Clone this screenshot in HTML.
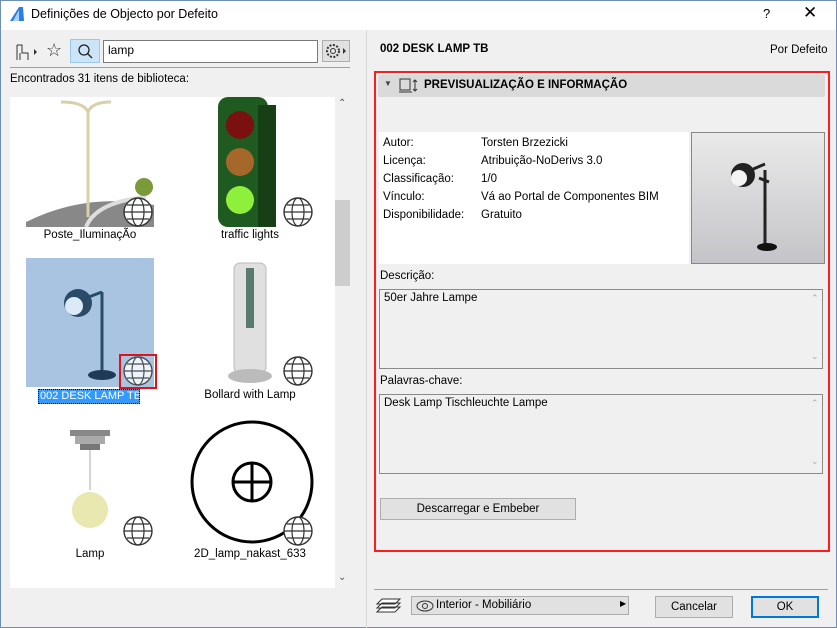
<!DOCTYPE html><html><head><meta charset="utf-8"><style>
*{box-sizing:border-box;margin:0;padding:0}
body{width:837px;height:628px;overflow:hidden;background:#f0f0f0;font-family:"Segoe UI","Liberation Sans",sans-serif;font-size:12px;color:#000;position:relative}
.a{position:absolute;white-space:nowrap}
.g{position:absolute;width:30px;height:30px}
.lbl{position:absolute;width:160px;text-align:center;font-size:11.5px;white-space:nowrap}
.sa{position:absolute;font-size:9px;color:#aaa}
</style></head><body>
<div class="a" style="left:0;top:0;width:837px;height:628px;border:1px solid #6d8fb3"></div>
<div class="a" style="left:1px;top:1px;width:835px;height:29px;background:#fff"></div>
<svg class="a" style="left:9px;top:6px" width="16" height="16"><path d="M1 15 L10 1 L14 1 L15 15Z" fill="#2b7fe0"/><path d="M4 15 L10 4 L10 15Z" fill="#a9d0ff"/></svg>
<div class="a" style="left:31px;top:7px;font-size:12.5px">Definições de Objecto por Defeito</div>
<div class="a" style="left:763px;top:6px;font-size:13px">?</div>
<div class="a" style="left:803px;top:3px;font-size:17px;font-weight:300">✕</div>
<svg class="a" style="left:15px;top:43px" width="24" height="18"><path d="M2 2h5v8h6v7M2 2v15M5 10v7M7 10h6" stroke="#333" fill="none"/><path d="M19 6l3 3-3 3z" fill="#333"/></svg>
<div class="a" style="left:46px;top:40px;font-size:18px;color:#333">☆</div>
<div class="a" style="left:70px;top:39px;width:30px;height:24px;background:#cce4f7;border:1px solid #99c9ef"></div>
<svg class="a" style="left:77px;top:43px" width="16" height="16"><circle cx="7" cy="7" r="5" stroke="#222" fill="none" stroke-width="1.3"/><path d="M10.5 10.5L15 15" stroke="#222" stroke-width="1.3"/></svg>
<div class="a" style="left:103px;top:40px;width:215px;height:23px;background:#fff;border:1px solid #7a7a7a;padding:2px 4px;font-size:12px">lamp</div>
<div class="a" style="left:322px;top:40px;width:28px;height:22px;background:#e1e1e1;border:1px solid #adadad"></div>
<svg class="a" style="left:324px;top:42px" width="24" height="18"><circle cx="9" cy="9" r="6" stroke="#333" fill="none" stroke-dasharray="2 1.5" stroke-width="2"/><circle cx="9" cy="9" r="2.5" stroke="#333" fill="none"/><path d="M19 6l3 3-3 3z" fill="#333"/></svg>
<div class="a" style="left:10px;top:67px;width:340px;height:1px;background:#a0a0a0"></div>
<div class="a" style="left:10px;top:73px;font-size:11.5px">Encontrados 31 itens de biblioteca:</div>
<div class="a" style="left:10px;top:97px;width:340px;height:491px;background:#fff"></div>
<div class="a" style="left:335px;top:97px;width:15px;height:491px;background:#f0f0f0"></div>
<div class="a" style="left:335px;top:200px;width:15px;height:86px;background:#cdcdcd"></div>
<div class="a" style="left:338px;top:98px;font-size:10px;color:#555">⌃</div>
<div class="a" style="left:338px;top:572px;font-size:10px;color:#555">⌄</div>
<svg class="a" style="left:26px;top:97px" width="128" height="130"><path d="M0 125 Q60 95 128 108 L128 130 L0 130Z" fill="#888"/><path d="M60 130 Q70 105 120 100" stroke="#ddd" stroke-width="4" fill="none"/><path d="M62 120 V15 Q58 5 35 5 M62 15 Q66 5 85 5" stroke="#d8d0a8" stroke-width="3" fill="none"/><circle cx="118" cy="90" r="9" fill="#7a9a3a"/></svg>
<svg class="a" style="left:210px;top:97px" width="72" height="130"><rect x="8" y="0" width="50" height="130" rx="10" fill="#1f5a20"/><rect x="48" y="8" width="18" height="122" fill="#163f16"/><circle cx="30" cy="28" r="14" fill="#7a1010"/><circle cx="30" cy="65" r="14" fill="#a5682a"/><circle cx="30" cy="103" r="14" fill="#8ef03a"/></svg>
<div class="a" style="left:26px;top:258px;width:128px;height:129px;background:#a8c4e0"></div>
<svg class="a" style="left:26px;top:258px" width="128" height="129"><circle cx="52" cy="45" r="14" fill="#2b4a68"/><circle cx="48" cy="48" r="9" fill="#dbeaf7"/><path d="M60 40 L76 34 M76 34 V115" stroke="#2b4a68" stroke-width="3"/><ellipse cx="76" cy="117" rx="14" ry="5" fill="#1e3a56"/></svg>
<svg class="a" style="left:186px;top:258px" width="128" height="129"><rect x="48" y="5" width="32" height="110" rx="6" fill="#e0e0e0" stroke="#bbb"/><rect x="60" y="10" width="8" height="60" fill="#5a7a70"/><ellipse cx="64" cy="118" rx="22" ry="7" fill="#bbb"/></svg>
<svg class="a" style="left:60px;top:425px" width="60" height="120"><rect x="10" y="5" width="40" height="6" fill="#888"/><rect x="15" y="11" width="30" height="8" fill="#aaa"/><rect x="20" y="19" width="20" height="6" fill="#777"/><line x1="30" y1="25" x2="30" y2="65" stroke="#aaa"/><circle cx="30" cy="85" r="18" fill="#e8e8b0"/></svg>
<svg class="a" style="left:190px;top:420px" width="124" height="124"><circle cx="62" cy="62" r="60" stroke="#000" stroke-width="3" fill="none"/><circle cx="62" cy="62" r="19" stroke="#000" stroke-width="3" fill="none"/><path d="M43 62H81M62 43V81" stroke="#000" stroke-width="3"/></svg>
<div class="a" style="left:119px;top:354px;width:38px;height:35px;border:2px solid #e0121a"></div>
<svg width="0" height="0" style="position:absolute"><defs><g id="gl"><circle cx="15" cy="15" r="14" fill="#fff" stroke="#333" stroke-width="1.4"/><ellipse cx="15" cy="15" rx="6" ry="14" fill="none" stroke="#333" stroke-width="1.2"/><path d="M1 15H29M4 8H26M4 22H26" stroke="#333" stroke-width="1.2"/></g></defs></svg>
<svg class="g" style="left:123px;top:197px"><use href="#gl"/></svg>
<svg class="g" style="left:283px;top:197px"><use href="#gl"/></svg>
<svg class="g" style="left:123px;top:356px"><use href="#gl" opacity=".8"/></svg>
<svg class="g" style="left:283px;top:356px"><use href="#gl"/></svg>
<svg class="g" style="left:123px;top:516px"><use href="#gl"/></svg>
<svg class="g" style="left:283px;top:516px"><use href="#gl"/></svg>
<div class="lbl" style="left:10px;top:229px">Poste_IluminaçÃo</div>
<div class="lbl" style="left:170px;top:229px">traffic lights</div>
<div class="a" style="left:38px;top:389px;width:102px;height:15px;background:#3399ff;color:#fff;font-size:11px;line-height:13px;padding-left:1px;border:1px dotted #000;overflow:hidden">002 DESK LAMP TB</div>
<div class="lbl" style="left:170px;top:389px">Bollard with Lamp</div>
<div class="lbl" style="left:10px;top:548px">Lamp</div>
<div class="lbl" style="left:170px;top:548px">2D_lamp_nakast_633</div>
<div class="a" style="left:366px;top:30px;width:1px;height:598px;background:#d8d8d8"></div>
<div class="a" style="left:380px;top:43px;font-weight:bold;font-size:11.5px">002 DESK LAMP TB</div>
<div class="a" style="left:770px;top:44px;font-size:11.5px">Por Defeito</div>
<div class="a" style="left:374px;top:71px;width:456px;height:481px;border:2px solid #ff1c1c"></div>
<div class="a" style="left:378px;top:75px;width:447px;height:22px;background:#dadada;border-radius:2px"></div>
<div class="a" style="left:384px;top:79px;font-size:8px;color:#444">▼</div>
<svg class="a" style="left:399px;top:78px" width="20" height="16"><rect x="1" y="1" width="10" height="11" fill="none" stroke="#333"/><path d="M0 14h13" stroke="#333"/><path d="M16 2v11M14 4l2-2 2 2M14 11l2 2 2-2" stroke="#333" fill="none"/></svg>
<div class="a" style="left:424px;top:79px;font-weight:bold;font-size:11.5px">PREVISUALIZAÇÃO E INFORMAÇÃO</div>
<div class="a" style="left:379px;top:132px;width:310px;height:132px;background:#fff"></div>
<div class="a" style="left:383px;top:134px;line-height:18px;font-size:11.5px">Autor:<br>Licença:<br>Classificação:<br>Vínculo:<br>Disponibilidade:</div>
<div class="a" style="left:481px;top:134px;line-height:18px;font-size:11.5px">Torsten Brzezicki<br>Atribuição-NoDerivs 3.0<br>1/0<br>Vá ao Portal de Componentes BIM<br>Gratuito</div>
<div class="a" style="left:691px;top:132px;width:134px;height:132px;border:1px solid #888;background:linear-gradient(#eaeaea,#c4c4c8)"></div>
<svg class="a" style="left:725px;top:150px" width="60" height="110"><circle cx="18" cy="25" r="12" fill="#222"/><circle cx="14" cy="28" r="8" fill="#f4f4f4"/><path d="M26 20L40 14M34 28L44 32M40 20V95" stroke="#222" stroke-width="3"/><ellipse cx="42" cy="97" rx="10" ry="4" fill="#111"/></svg>
<div class="a" style="left:380px;top:270px;font-size:11.5px">Descrição:</div>
<div class="a" style="left:379px;top:289px;width:444px;height:80px;border:1px solid #8a8a8a;padding:2px 4px;font-size:11.5px">50er Jahre Lampe</div>
<div class="sa" style="left:811px;top:293px">⌃</div><div class="sa" style="left:811px;top:351px">⌄</div>
<div class="a" style="left:380px;top:375px;font-size:11.5px">Palavras-chave:</div>
<div class="a" style="left:379px;top:394px;width:444px;height:80px;border:1px solid #8a8a8a;padding:2px 4px;font-size:11.5px">Desk Lamp Tischleuchte Lampe</div>
<div class="sa" style="left:811px;top:398px">⌃</div><div class="sa" style="left:811px;top:456px">⌄</div>
<div class="a" style="left:380px;top:498px;width:196px;height:22px;background:#e1e1e1;border:1px solid #adadad;text-align:center;line-height:20px;font-size:11.5px">Descarregar e Embeber</div>
<div class="a" style="left:374px;top:589px;width:454px;height:1px;background:#a0a0a0"></div>
<svg class="a" style="left:376px;top:597px" width="26" height="18"><path d="M6 2h18l-5 5H1zM6 6h18l-5 5H1zM6 10h18l-5 5H1z" fill="#fff" stroke="#333"/></svg>
<div class="a" style="left:411px;top:596px;width:218px;height:19px;background:#e1e1e1;border:1px solid #adadad;padding-left:24px;line-height:17px;font-size:11.5px">Interior - Mobiliário</div>
<svg class="a" style="left:416px;top:600px" width="18" height="12"><ellipse cx="9" cy="6" rx="8" ry="5" fill="none" stroke="#333"/><circle cx="9" cy="6" r="2.5" fill="none" stroke="#333"/></svg>
<div class="a" style="left:620px;top:599px;font-size:8px">▶</div>
<div class="a" style="left:655px;top:596px;width:78px;height:22px;background:#e1e1e1;border:1px solid #adadad;text-align:center;line-height:20px;font-size:11.5px">Cancelar</div>
<div class="a" style="left:751px;top:596px;width:68px;height:22px;background:#e1e1e1;border:2px solid #0078d7;text-align:center;line-height:18px;font-size:11.5px">OK</div>
</body></html>
